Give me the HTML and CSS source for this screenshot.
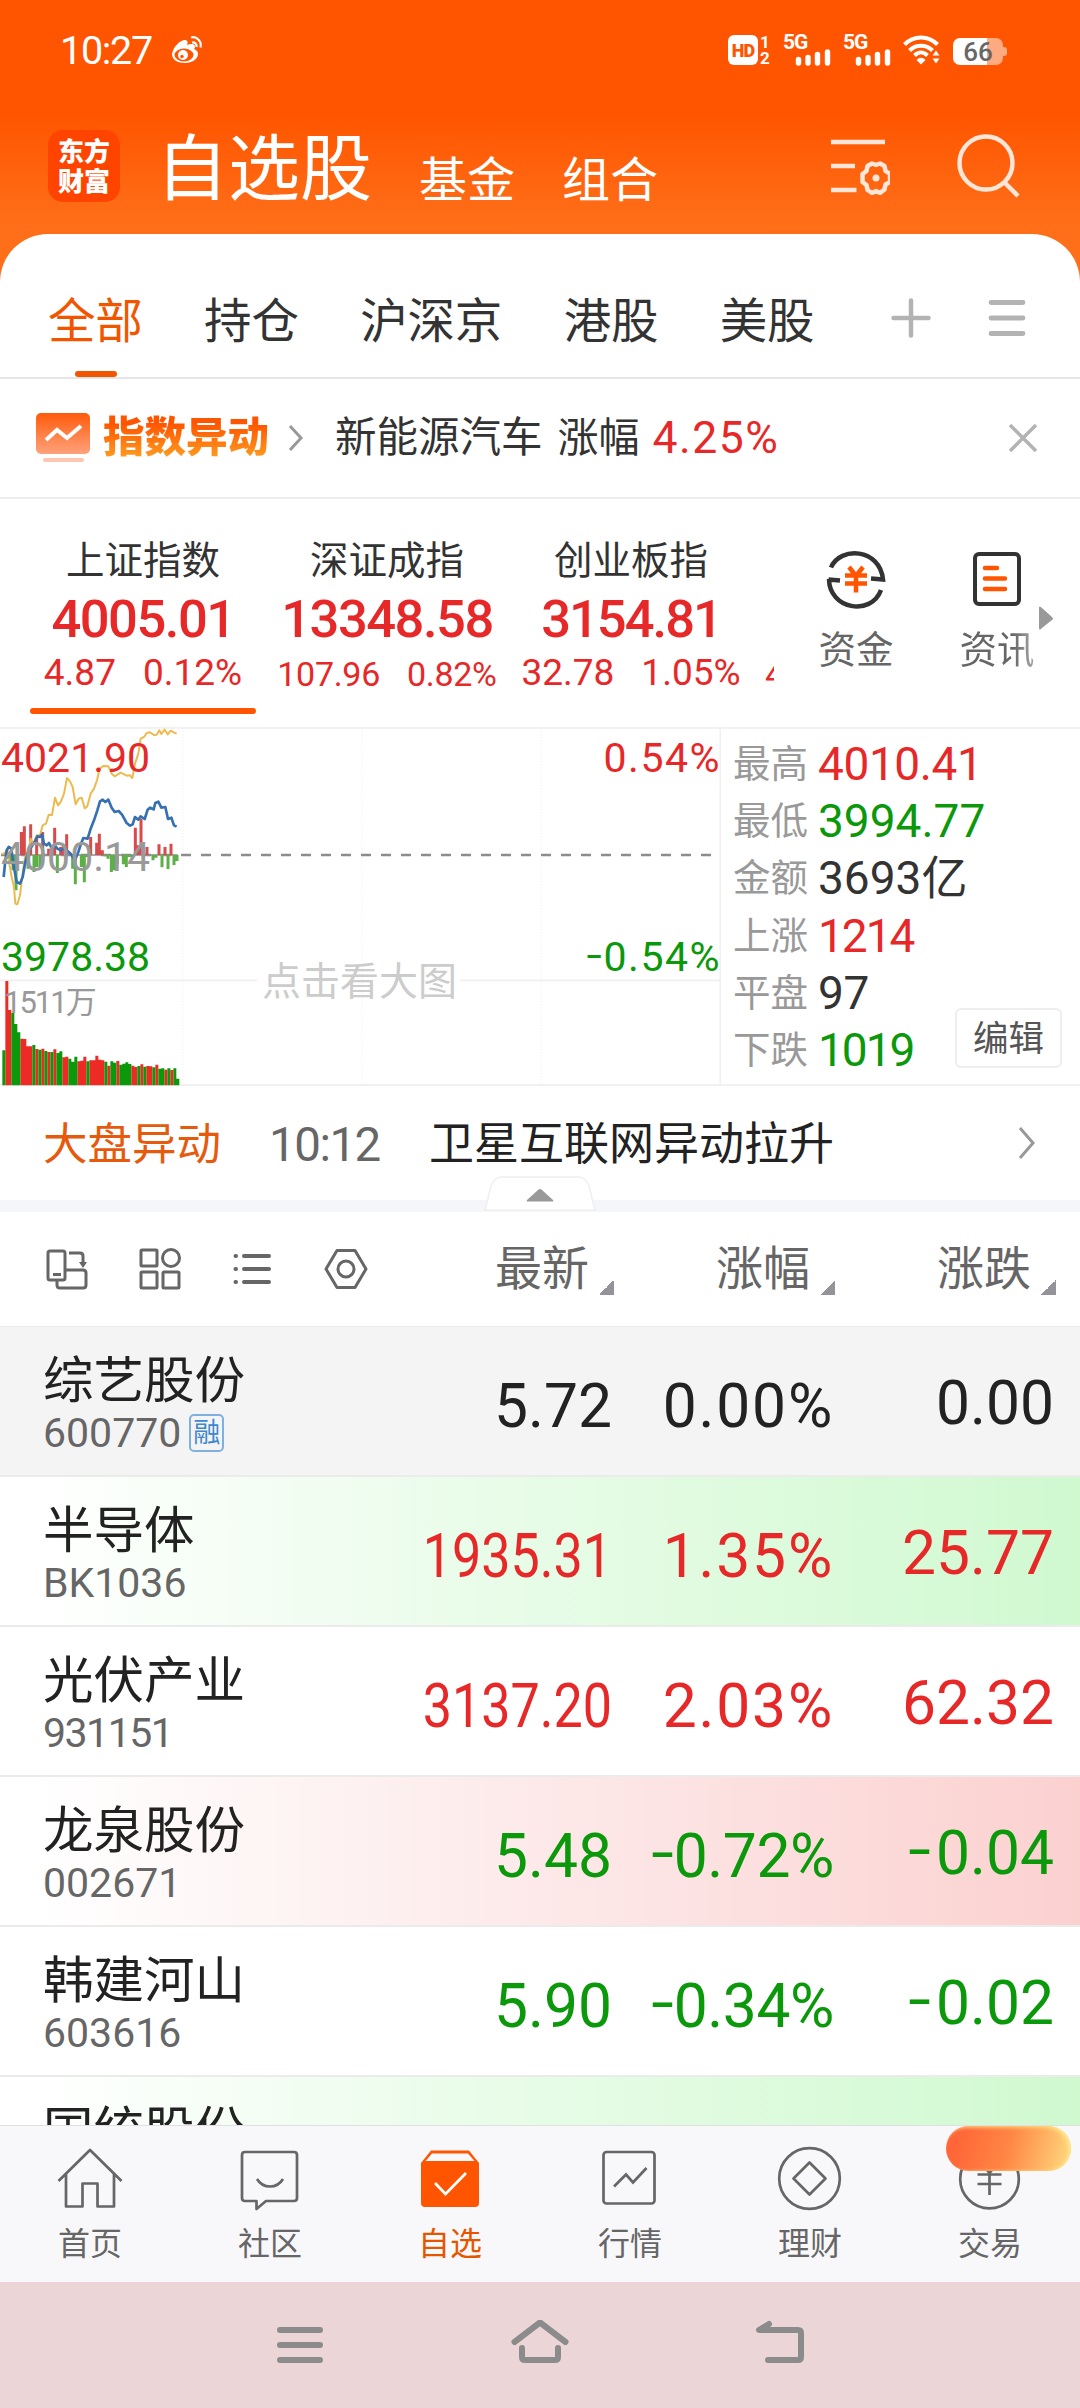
FILE: index.html
```html
<!DOCTYPE html>
<html lang="zh-CN">
<head>
    <meta charset="UTF-8">
    <meta name="viewport" content="width=device-width, initial-scale=1.0">
    <title>自选股</title>
    <link rel="stylesheet" href="styles.css">
</head>
<body>
<div class="app">
    <header class="header">
        <div class="status-bar">
            <span class="time">10:27</span>
            <svg class="weibo" width="32" height="30" viewBox="0 0 32 30" fill="none" stroke="#fff">
                <path fill="#fff" stroke="none" d="M1 19C2 12 9 5 14 5c3 0 3 3 2 5 3-1 7-2 8 1 0 1 0 2-1 3 3 1 4 3 4 5 0 5-6 9-13 9S1 25 1 19z"/>
                <ellipse cx="13" cy="20" rx="9.500" ry="6.500" fill="#ff5500" stroke="none"/>
                <circle cx="12" cy="20" r="5" fill="#fff" stroke="none"/>
                <circle cx="11" cy="21.500" r="1.700" fill="#ff5500" stroke="none"/>
                <path stroke-width="2.200" d="M20 2.500c6-1.500 11 4 9.500 10M21 7.500c3-.5 5 1.500 4.500 4.500"/>
            </svg>
            <div class="status-icons">
                <span class="hd">HD</span>
                <span class="sims"><i>1</i><i>2</i></span>
                <span class="signal">
                    <b>5G</b>
                    <svg width="36" height="17" viewBox="0 0 36 17" stroke="#fff" stroke-width="5.400" stroke-linecap="round"><path d="M3.500 14v-3.500M13 14V8.500M22.500 14V5.500M32.500 14V3"/></svg>
                </span>
                <span class="signal">
                    <b>5G</b>
                    <svg width="36" height="17" viewBox="0 0 36 17" stroke="#fff" stroke-width="5.400" stroke-linecap="round"><path d="M3.500 14v-3.500M13 14V8.500M22.500 14V5.500M32.500 14V3"/></svg>
                </span>
                <svg class="wifi" width="38" height="30" viewBox="0 0 38 30" fill="none" stroke="#fff" stroke-width="4">
                    <path d="M1.500 9.500c9-9.500 24-9.500 33 0M6.500 15.500c6.500-6.500 16.500-6.500 23 0M11.500 20.500c4-4 9-4 13 0"/>
                    <path fill="#fff" stroke="none" d="M13.500 25c3-3 6-3 9 0L18 29.500zM29.500 20.500l3.500-5 3.500 5zM29.500 23.500l3.500 5 3.500-5z"/>
                </svg>
                <span class="battery">66</span>
            </div>
        </div>
        <div class="title-bar">
            <div class="logo">东方<br>财富</div>
            <h1>自选股</h1>
            <a class="nav-link">基金</a>
            <a class="nav-link">组合</a>
            <svg class="manage" width="60" height="60" viewBox="0 0 60 60" fill="none" stroke="#ffe6d8" stroke-width="4.500">
                <path d="M1 7h54M1 31h24M1 55h25.500"/>
                <path stroke-linejoin="round" d="M42 28.500l4 1.500 4-1.500 4.500 2.500 1 5 4.500 3v8l-4.500 2.500-1 5L50 58l-4-2-4 2-4.500-3-1-5-4-3v-8l4-3 1-5z"/>
                <circle cx="46" cy="43" r="3.500" fill="#ffe6d8" stroke="none"/>
            </svg>
            <svg class="search" width="64" height="66" viewBox="0 0 64 66" fill="none" stroke="#ffe6d8" stroke-width="4.500">
                <circle cx="29" cy="30" r="26.500"/>
                <path d="M47 49l14 14"/>
            </svg>
        </div>
    </header>

    <main class="card">
        <nav class="tabs">
            <a class="active">全部</a>
            <a>持仓</a>
            <a>沪深京</a>
            <a>港股</a>
            <a>美股</a>
            <svg class="add" width="40" height="40" viewBox="0 0 40 40" stroke="#b3b3b3" stroke-width="4.500" stroke-linecap="round"><path d="M2.500 20h35M20 2.500v35"/></svg>
            <svg class="more" width="38" height="38" viewBox="0 0 38 38" stroke="#b3b3b3" stroke-width="4.800" stroke-linecap="round"><path d="M3 3.500h32M3 19h32M3 34.500h32"/></svg>
        </nav>

        <section class="notice">
            <svg width="54" height="50" viewBox="0 0 54 50">
                <defs>
                    <linearGradient id="ng" x1="0" y1="0" x2="0" y2="1"><stop offset="0" stop-color="#ff5a0a"/><stop offset="1" stop-color="#ffa27c"/></linearGradient>
                </defs>
                <rect width="54" height="41" rx="5" fill="url(#ng)"/>
                <path d="M10 27l11-10 10 8 14-12" fill="none" stroke="#fff" stroke-width="4"/>
                <rect x="7" y="45" width="41" height="4" rx="2" fill="#ffc7af"/>
            </svg>
            <strong>指数异动</strong>
            <svg class="arrow" width="16" height="28" viewBox="0 0 16 28" fill="none" stroke="#999" stroke-width="3"><path d="M2 2l11 12L2 26"/></svg>
            <span class="topic">新能源汽车</span>
            <span class="label">涨幅</span>
            <span class="value">4.25%</span>
            <svg class="close" width="30" height="30" viewBox="0 0 30 30" stroke="#b3b3b3" stroke-width="3.500"><path d="M2 2l26 26M28 2L2 28"/></svg>
        </section>

        <section class="indices">
            <div class="index-list">
                <div class="index active">
                    <h3>上证指数</h3>
                    <div class="point">4005.01</div>
                    <div class="change"><span>4.87</span><span>0.12%</span></div>
                </div>
                <div class="index">
                    <h3>深证成指</h3>
                    <div class="point">13348.58</div>
                    <div class="change small"><span>107.96</span><span>0.82%</span></div>
                </div>
                <div class="index">
                    <h3>创业板指</h3>
                    <div class="point narrow">3154.81</div>
                    <div class="change"><span>32.78</span><span>1.05%</span></div>
                </div>
                <div class="index next">
                    <h3></h3>
                    <div class="point"></div>
                    <div class="change small"><span>4</span></div>
                </div>
            </div>
            <a class="entry">
                <svg width="60" height="60" viewBox="0 0 60 60" fill="none" stroke="#333" stroke-width="4.500">
                    <path d="M5 18.500C14-3 54-1 57 30.500l-12-1M3 30C3 60 45 68 55 41M2.500 30.500l11.500 1"/>
                    <path stroke="#ff5500" stroke-width="4.500" d="M23 18l7 9 7-9M30 26v17.500M19 26.500h22M19 34.500h22"/>
                </svg>
                资金
            </a>
            <a class="entry last">
                <svg width="60" height="60" viewBox="0 0 60 60" fill="none" stroke="#333" stroke-width="4">
                    <rect x="8" y="5" width="44" height="50" rx="4"/>
                    <path stroke="#ff5500" stroke-width="4.500" stroke-linecap="round" d="M18 19h12M18 29.500h20M18 40h20"/>
                </svg>
                <span>资讯</span>
            </a>
            <svg class="next-arrow" width="16" height="26" viewBox="0 0 16 26"><path d="M1 3q0-3 3 0l10 9q2 2 0 3L4 23q-3 3-3 0z" fill="#999"/></svg>
        </section>

        <section class="market">
            <div class="chart">
                <!-- viewBox in thirds of a pixel -->
                <svg width="721" height="359" viewBox="0 20 2163 1077" fill="none">
                    <path stroke="#f0f0f0" stroke-width="5" d="M0 780h772M1380 780h783M0 1095h2163M2161 20v1077"/>
                    <path stroke="#ececec" stroke-width="3" stroke-dasharray="3 6" d="M549 24v1070M1086 24v1070M1623 24v1070"/>
                    <path stroke="#8c8c8c" stroke-width="7" stroke-dasharray="30 30" d="M3 404h2140"/>
                    <path stroke="#8c8c8c" stroke-width="4" d="M3 404h530"/>
                    <g id="flow" stroke-width="9"></g>
                    <path stroke="#edbb4d" stroke-width="6" stroke-linejoin="round" d="M5 402L15 398L22 385L28 430L35 470L42 500L46 550L52 552L60 525L68 460L75 410L85 395L92 355L100 370L110 345L120 345L128 315L138 310L146 283L156 284L165 232L174 255L183 243L192 220L201 173L210 183L218 200L227 252L236 235L245 232L254 264L262 258L272 220L282 205L291 180L299 145L310 137L325 138L335 160L344 168L362 157L380 166L390 165L397 173L405 130L415 100L422 55L432 50L440 38L450 36L462 44L470 43L478 30L484 41L494 28L503 42L512 31L521 36L530 40"/>
                    <path stroke="#3470b2" stroke-width="8" stroke-linejoin="round" d="M11 470L15 430L20 390L26 380L34 385L40 430L50 485L60 490L68 470L76 425L84 395L94 380L104 365L112 348L120 350L126 342L132 370L140 375L147 368L156 385L164 375L172 385L182 390L190 385L200 390L212 400L225 420L235 395L243 370L250 353L263 355L272 325L282 300L292 270L300 243L308 238L316 245L325 238L335 262L344 275L356 272L366 283L380 308L390 316L398 312L405 290L415 298L422 288L434 296L443 268L450 262L461 267L466 248L475 244L484 262L496 260L504 296L514 292L522 315L530 319"/>
                    <g id="volume" stroke-width="9"></g>
                </svg>
                <span class="axis high">4021.90</span>
                <span class="axis mid">4000.14</span>
                <span class="axis low">3978.38</span>
                <span class="axis high right">0.54%</span>
                <span class="axis low right"><u>-</u>0.54%</span>
                <span class="axis vol">1511万</span>
                <span class="hint">点击看大图</span>
            </div>
            <dl class="stats">
                <div><dt>最高</dt><dd class="up">4010.41</dd></div>
                <div><dt>最低</dt><dd class="down wide">3994.77</dd></div>
                <div><dt>金额</dt><dd class="wide">3693亿</dd></div>
                <div><dt>上涨</dt><dd class="up tight">1214</dd></div>
                <div><dt>平盘</dt><dd>97</dd></div>
                <div><dt>下跌</dt><dd class="down tight">1019</dd></div>
                <button class="edit">编辑</button>
            </dl>
        </section>

        <section class="news">
            <span class="tag">大盘异动</span>
            <span class="at">10:12</span>
            <span class="text">卫星互联网异动拉升</span>
            <svg width="20" height="34" viewBox="0 0 20 34" fill="none" stroke="#999" stroke-width="3"><path d="M3 2l13 15L3 32"/></svg>
        </section>
        <div class="divider">
            <svg class="handle" width="112" height="35" viewBox="0 0 112 35">
                <path d="M1 34C6 22 4 1 18 1h76c14 0 12 21 17 33z" fill="#fff" stroke="#efefef" stroke-width="1.500"/>
                <path d="M43 24l11-10q2-2 4 0l11 10q1 1.500-1 1.500H44q-2 0-1-1.500z" fill="#999"/>
            </svg>
        </div>

        <section class="list-head">
            <div class="tools">
                <svg width="44" height="44" viewBox="0 0 44 44" fill="none" stroke="#666" stroke-width="3">
                    <rect x="3" y="4" width="17" height="29" rx="2"/>
                    <path d="M24 6h11q3 0 3 3v8M12 33v5q0 3 3 3h23q3 0 3-3V26q0-3-3-3H20M8 27.500h8"/>
                    <path d="M34 15h8l-4 6z" fill="#666" stroke="none"/>
                </svg>
                <svg width="44" height="44" viewBox="0 0 44 44" fill="none" stroke="#666" stroke-width="3">
                    <rect x="3" y="3" width="16" height="16" rx="1"/><circle cx="33" cy="11" r="8.500"/>
                    <rect x="3" y="25" width="16" height="16" rx="1"/><rect x="25" y="25" width="16" height="16" rx="1"/>
                </svg>
                <svg width="44" height="44" viewBox="0 0 44 44" fill="none" stroke="#666" stroke-width="4" stroke-linecap="round">
                    <path d="M13 9h25M13 22h25M13 35h25M4.500 9h.5M4.500 22h.5M4.500 35h.5"/>
                </svg>
                <svg width="44" height="44" viewBox="0 0 44 44" fill="none" stroke="#666" stroke-width="3" stroke-linejoin="round">
                    <path d="M13 3.500h18L42 22 31 40.500H13L2 22z"/><circle cx="22" cy="22" r="8"/>
                </svg>
            </div>
            <div class="col price">最新<i></i></div>
            <div class="col rate">涨幅<i></i></div>
            <div class="col diff">涨跌<i></i></div>
        </section>

        <section class="stock-list">
            <div class="stock selected">
                <div class="name"><h2>综艺股份</h2><p>600770<em>融</em></p></div>
                <div class="price">5.72</div><div class="rate">0.00%</div><div class="diff">0.00</div>
            </div>
            <div class="stock flash-green up">
                <div class="name"><h2>半导体</h2><p>BK1036</p></div>
                <div class="price long">1935.31</div><div class="rate">1.35%</div><div class="diff">25.77</div>
            </div>
            <div class="stock up">
                <div class="name"><h2>光伏产业</h2><p class="tight">931151</p></div>
                <div class="price long">3137.20</div><div class="rate">2.03%</div><div class="diff">62.32</div>
            </div>
            <div class="stock flash-red down">
                <div class="name"><h2>龙泉股份</h2><p>002671</p></div>
                <div class="price">5.48</div><div class="rate"><u>-</u>0.72%</div><div class="diff"><u>-</u>0.04</div>
            </div>
            <div class="stock down">
                <div class="name"><h2>韩建河山</h2><p>603616</p></div>
                <div class="price">5.90</div><div class="rate"><u>-</u>0.34%</div><div class="diff"><u>-</u>0.02</div>
            </div>
            <div class="stock flash-green">
                <div class="name"><h2>国统股份</h2></div>
            </div>
        </section>
    </main>

    <nav class="tab-bar">
        <a>
            <svg width="66" height="66" viewBox="0 0 66 66" fill="none" stroke="#666" stroke-width="2.700" stroke-linejoin="round"><path d="M1.500 35L33 4l31.500 31M9 28v32.500h16.500v-23h15v23H57V28"/></svg>
            首页
        </a>
        <a>
            <svg width="66" height="66" viewBox="0 0 66 66" fill="none" stroke="#666" stroke-width="2.700" stroke-linejoin="round"><path d="M8 6h49q3 0 3 3v43q0 3-3 3H29l-9.500 8v-8H8q-3 0-3-3V9q0-3 3-3zM20 33c6 10 20 10 26 0"/></svg>
            社区
        </a>
        <a class="active">
            <svg width="66" height="66" viewBox="0 0 66 66" fill="none">
                <path fill="#ff5500" d="M4 17L14 4.500h38L62 17v40q0 4-4 4H8q-4 0-4-4z"/>
                <path fill="#f8f8fa" d="M8.500 15L15 7.500h36l6.500 7.500z"/>
                <path stroke="#fff" stroke-width="2.700" d="M18 37l10.500 11L49 27"/>
            </svg>
            自选
        </a>
        <a>
            <svg width="66" height="66" viewBox="0 0 66 66" fill="none" stroke="#666" stroke-width="2.700"><rect x="6.500" y="6" width="51" height="51.500" rx="3"/><path d="M17 40.500l12-12 7 8L49.500 22"/></svg>
            行情
        </a>
        <a>
            <svg width="66" height="66" viewBox="0 0 66 66" fill="none" stroke="#666" stroke-width="2.700" stroke-linejoin="round"><circle cx="32.500" cy="32.500" r="30.300"/><path d="M32.500 16.500L48.500 32.500l-16 16-16-16z"/></svg>
            理财
        </a>
        <a>
            <svg width="66" height="66" viewBox="0 0 66 66" fill="none" stroke="#666" stroke-width="2.700"><circle cx="32.500" cy="33" r="29.300"/><path d="M23 15l9.500 12L42 15M32.500 26v23M20.500 28.500h24M20.500 38h24"/></svg>
            交易
            <span class="bubble"></span>
        </a>
    </nav>

    <footer class="system-nav">
        <svg width="60" height="50" viewBox="0 0 60 50" fill="none" stroke="#8b8b8b" stroke-width="6" stroke-linecap="round"><path d="M10 10h40M10 25h40M10 40h40"/></svg>
        <svg width="60" height="50" viewBox="0 0 60 50" fill="none" stroke="#8b8b8b" stroke-width="6" stroke-linecap="round" stroke-linejoin="round"><path d="M4.500 22L30 2.500 55.500 22M12 28v9q0 3 3 3h30q3 0 3-3v-9"/></svg>
        <svg width="60" height="50" viewBox="0 0 60 50" fill="none" stroke="#8b8b8b" stroke-width="6" stroke-linecap="round" stroke-linejoin="round"><path d="M19 4L9 10h39q3 0 3 3v24q0 3-3 3H18"/></svg>
    </footer>
</div>

<script>
    // 红绿柱: [x, y]
    const up = [[64,335],[73,318],[92,312],[110,350],[128,335],[146,385],[164,322],[182,380],[190,375],[200,342],[272,350],[290,367],[298,340],[307,390],[406,322],[415,375],[423,296],[441,380],[477,372],[495,380],[513,370]];
    const down = [[30,430],[39,450],[48,510],[84,445],[102,455],[111,440],[121,445],[172,458],[218,445],[226,492],[244,440],[253,486],[262,410],[316,408],[324,415],[334,455],[343,450],[352,432],[370,432],[379,440],[388,410],[397,415],[459,420],[468,412],[486,441],[504,446],[522,434],[531,422]];

    // 成交量
    const volume = 'g990 r782 r869 g878 g911 g936 r955 r956 r978 r978 g974 r986 g988 r985 g992 r995 g995 r987 g998 g993 r1011 r1009 g1015 g1024 g1009 r1023 r1021 r1009 g1023 r1020 r1020 r1006 r1018 r1020 g1024 r1036 g1023 g1027 r1022 g1033 g1030 g1026 g1031 r1036 r1040 g1037 r1032 g1039 r1037 r1038 g1041 r1033 g1045 g1044 r1048 g1044 r1049 g1044 g1075'.split(' ');

    function bars(points, base, color) {
        const d = points.map(p => `M${p[0]} ${base}V${p[1]}`).join('');
        return `<path stroke="${color}" d="${d}"/>`;
    }

    const red = [], green = [];
    volume.forEach((v, i) => {
        (v[0] === 'r' ? red : green).push([11.5 + i * 9, v.slice(1)]);
    });

    document.getElementById('flow').innerHTML = bars(up, 404, '#d94b4b') + bars(down, 404, '#5cb046');
    document.getElementById('volume').innerHTML = bars(red, 1095, '#ee2a25') + bars(green, 1095, '#0b980b');
</script>
</body>
</html>
```
FILE: styles.css
```css
* {
    box-sizing: border-box;
}
body, h1, h2, h3, p, dl, dd {
    margin: 0;
    font-weight: 400;
}
body {
    width: 1080px;
    font-family: Roboto, "Noto Sans CJK SC", sans-serif;
    color: #333;
    background: #fff;
}
svg {
    display: block;
    flex: none;
}
i, em {
    font-style: normal;
}
/* 负号 */
u {
    display: inline-block;
    text-decoration: none;
    transform: translateY(-.06em) scaleX(1.35);
    transform-origin: right;
}
.app {
    display: flex;
    flex-direction: column;
    height: 2408px;
    overflow: hidden;
    background: linear-gradient(#ff5500 0, #ff5500 115px, #ff6d17 215px, #ff701a 300px);
}

/* 顶部 */
.header {
    flex: none;
    height: 234px;
    color: #fff;
}
.status-bar {
    display: flex;
    align-items: center;
    height: 100px;
    padding: 0 73px 0 60px;
}
.time {
    font-size: 39.500px;
    letter-spacing: -1.300px;
}
.weibo {
    margin-left: 19px;
}
.status-icons {
    display: flex;
    align-items: center;
    margin-left: auto;
    height: 30px;
}
.hd {
    width: 30px;
    height: 30px;
    border-radius: 6px;
    background: #fff;
    color: #ff5500;
    font-size: 18px;
    font-weight: 900;
    line-height: 31px;
    text-align: center;
    letter-spacing: -.8px;
}
.sims {
    display: flex;
    flex-direction: column;
    width: 13px;
    margin-left: 2px;
    font-size: 17px;
    font-weight: 700;
    line-height: 16px;
}
.signal {
    display: flex;
    flex-direction: column;
    width: 48px;
    height: 30px;
    margin-left: 10px;
}
.signal + .signal {
    margin-left: 12px;
}
.signal b {
    font-size: 21px;
    line-height: 14px;
    letter-spacing: -1px;
}
.signal svg {
    margin: 0 0 0 12px;
}
.wifi {
    margin-left: 12px;
}
.battery {
    position: relative;
    width: 50px;
    height: 27px;
    margin: 3px 4px 0 12px;
    border-radius: 7px;
    background: linear-gradient(90deg, #fff 34px, #ffaa80 34px);
    color: #666;
    font-size: 26px;
    font-weight: 500;
    line-height: 28px;
    text-align: center;
}
.battery::after {
    content: "";
    position: absolute;
    left: 50px;
    top: 9px;
    width: 4px;
    height: 9px;
    border-radius: 0 3px 3px 0;
    background: #ffaa80;
}
.title-bar {
    display: flex;
    padding: 30px 0 0 48px;
}
.logo {
    width: 72px;
    height: 72px;
    padding-top: 7px;
    border-radius: 15px;
    background: #ff4400;
    font-size: 26px;
    font-weight: 900;
    line-height: 30px;
    text-align: center;
}
h1 {
    width: 216px;
    margin: 4px 0 0 36px;
    font-size: 72px;
    line-height: 72px;
}
.nav-link {
    margin: 15px 0 0 47px;
    font-size: 48px;
    line-height: 72px;
}
.manage {
    margin: 5px 0 0 172px;
}
.search {
    margin: 3px 0 0 67px;
}

/* 内容 */
.card {
    display: flex;
    flex-direction: column;
    flex: none;
    height: 1891px;
    border-radius: 48px 48px 0 0;
    background: #fff;
    overflow: hidden;
}
.card > * {
    flex: none;
}
.tabs {
    display: flex;
    align-items: center;
    gap: 61.500px;
    height: 145px;
    padding: 0 53px 0 48px;
    border-bottom: 2px solid #e6e6e6;
}
.tabs a {
    position: relative;
    padding-top: 31px;
    font-size: 47.500px;
    line-height: 114px;
    height: 143px;
    letter-spacing: -.2px;
}
.tabs .active {
    color: #f25500;
}
.tabs .active::after {
    content: "";
    position: absolute;
    left: 27px;
    bottom: 0;
    width: 42px;
    height: 6px;
    border-radius: 3px;
    background: #f25500;
}
.add {
    margin: 25px 0 0 15px;
}
.more {
    margin: 25px 0 0 -4px;
}
.notice {
    display: flex;
    align-items: center;
    height: 120px;
    padding-left: 36px;
    border-bottom: 2px solid #ececec;
    font-size: 41.500px;
    line-height: 120px;
}
.notice strong {
    margin-left: 13px;
    font-weight: 900;
    background: linear-gradient(#ff5500 38%, #ff9a1f 66%);
    -webkit-background-clip: text;
    background-clip: text;
    color: transparent;
}
.arrow {
    margin-left: 19px;
}
.topic {
    margin-left: 31px;
}
.label {
    margin-left: 15px;
    font-size: 41px;
}
.value {
    margin-left: 13px;
    color: #e62828;
    font-size: 44.500px;
    letter-spacing: 1.500px;
}
.close {
    margin: 0 0 0 auto;
    transform: translateX(-42px);
}
.indices {
    display: flex;
    height: 228px;
}
.index-list {
    display: flex;
    width: 774px;
    padding-left: 21px;
    overflow: hidden;
}
.index {
    flex: none;
    width: 244px;
    padding-top: 35px;
    color: #e62828;
    text-align: center;
}
.index h3 {
    height: 54px;
    color: #333;
    font-size: 38.500px;
    line-height: 54px;
}
.point {
    height: 62px;
    font-size: 52.500px;
    font-weight: 500;
    line-height: 62px;
    letter-spacing: -1.500px;
}
.point.narrow {
    letter-spacing: -2px;
}
.change {
    display: flex;
    justify-content: center;
    gap: 27px;
    height: 46px;
    font-size: 37px;
    line-height: 46px;
}
.change.small {
    font-size: 34px;
    padding-top: 1px;
    letter-spacing: -.3px;
}
.index.active::after {
    content: "";
    display: block;
    width: 226px;
    height: 6px;
    margin: 12px 0 0 9px;
    border-radius: 3px;
    background: #ff5500;
}
.index.next .change {
    justify-content: flex-start;
    padding-left: 12px;
}
.entry {
    display: flex;
    flex-direction: column;
    align-items: center;
    width: 82px;
    margin: 50px 0 0 41px;
    color: #666;
    font-size: 37.500px;
    line-height: 83px;
}
.entry.last {
    margin-left: 59px;
}
.entry.last span {
    background: linear-gradient(90deg, #666 70%, #aaa);
    -webkit-background-clip: text;
    background-clip: text;
    color: transparent;
}
.next-arrow {
    margin-top: 106px;
}

/* 分时图 */
.market {
    display: flex;
    height: 359px;
    border-top: 2px solid #f2f2f2;
    border-bottom: 2px solid #f2f2f2;
}
.chart {
    position: relative;
    width: 721px;
}
.chart > svg {
    margin-top: -2px;
}
.axis {
    position: absolute;
    left: 1px;
    font-size: 41px;
    line-height: 50px;
    color: #e62828;
}
.axis.right {
    left: auto;
    right: 0;
    letter-spacing: 1.500px;
}
.axis.high {
    top: 4px;
}
.axis.mid {
    top: 103px;
    color: #999;
}
.axis.low {
    top: 203px;
    color: #0b980b;
}
.axis.vol {
    top: 249px;
    left: 4px;
    color: #999;
    font-size: 31px;
    letter-spacing: -2px;
}
.hint {
    position: absolute;
    left: 262px;
    top: 226px;
    color: #ccc;
    font-size: 39px;
    line-height: 54px;
}
.stats {
    position: relative;
    flex: 1;
    padding: 7px 0 0 12px;
}
.stats div {
    display: flex;
    height: 57.200px;
    line-height: 57px;
}
.stats dt {
    width: 85px;
    color: #999;
    font-size: 37.500px;
}
.stats dd {
    font-size: 46px;
    letter-spacing: -.4px;
}
.stats .wide {
    letter-spacing: 0;
}
.stats .tight {
    letter-spacing: -2px;
}
.up {
    color: #e62828;
}
.down {
    color: #0b980b;
}
.edit {
    position: absolute;
    right: 18px;
    bottom: 16px;
    width: 107px;
    height: 60px;
    padding: 0;
    border: 2px solid #eee;
    border-radius: 6px;
    background: #fff;
    color: #555;
    font: 35.500px/58px Roboto, "Noto Sans CJK SC", sans-serif;
}

/* 异动 */
.news {
    display: flex;
    align-items: center;
    height: 114px;
    padding: 4px 43px 0 43px;
    font-size: 44.500px;
    line-height: 60px;
}
.tag {
    color: #e65a0d;
}
.at {
    width: 110px;
    margin: 0 50px 0 48px;
    color: #666;
    font-size: 47.500px;
    letter-spacing: -1.500px;
}
.text {
    color: #222;
    font-size: 45px;
}
.news svg {
    margin: -4px 0 0 auto;
}
.divider {
    position: relative;
    height: 12px;
    background: #f5f6f9;
}
.handle {
    position: absolute;
    left: 484px;
    bottom: 1px;
}

/* 自选列表 */
.list-head {
    display: flex;
    align-items: center;
    height: 114px;
    color: #666;
    font-size: 47px;
}
.tools {
    display: flex;
    gap: 49px;
    width: 392px;
    padding-left: 45px;
}
.col {
    display: flex;
    justify-content: flex-end;
    align-items: flex-end;
    line-height: 54px;
}
.list-head .price {
    width: 222px;
}
.list-head .rate, .list-head .diff {
    width: 221px;
}
.col i {
    width: 15px;
    height: 15px;
    margin: 0 0 1px 10px;
    background: linear-gradient(135deg, transparent 50%, #939399 50%);
}
.stock-list {
    border-top: 1px solid #ebebeb;
}
.stock {
    display: flex;
    height: 150px;
    border-bottom: 2px solid #ebebeb;
    font-size: 60.500px;
    line-height: 160px;
    text-align: right;
}
.stock.selected {
    background: #f4f4f4;
    color: #222;
}
.flash-green {
    background: linear-gradient(90deg, #fff 3%, #e9fce9 45%, #d0f9d0);
}
.flash-red {
    background: linear-gradient(90deg, #fff 3%, #fde9e9 50%, #fbd1d0);
}
.name {
    width: 300px;
    padding: 24px 0 0 43px;
    text-align: left;
    line-height: 1;
}
h2 {
    color: #222;
    font-size: 50.500px;
    line-height: 60px;
}
.name p {
    display: flex;
    align-items: center;
    height: 44px;
    color: #666;
    font-size: 41px;
    line-height: 44px;
}
.name p.tight {
    letter-spacing: -1.500px;
}
.name em {
    width: 35px;
    height: 38px;
    margin-left: 8px;
    border: 2px solid #7fb0e0;
    border-radius: 5px;
    color: #3f87d0;
    font-size: 27px;
    line-height: 35px;
    text-align: center;
}
.stock .price {
    width: 312px;
}
.stock .rate {
    width: 222px;
    letter-spacing: 1.800px;
}
.stock.down .rate {
    letter-spacing: -.4px;
}
.stock .diff {
    width: 220px;
    line-height: 154px;
}
.diff u {
    margin-right: 5px;
}
.stock .long {
    transform: scaleX(.86);
    transform-origin: right;
}

/* 底部导航 */
.tab-bar {
    display: flex;
    flex: none;
    height: 157px;
    border-top: 1px solid #e0e0e2;
    background: #f8f8fa;
}
.tab-bar a {
    position: relative;
    display: flex;
    flex-direction: column;
    align-items: center;
    width: 180px;
    padding-top: 20px;
    color: #666;
    font-size: 32px;
    line-height: 64px;
}
.tab-bar .active {
    color: #e65500;
}
.bubble {
    position: absolute;
    left: 46px;
    top: 0;
    width: 125px;
    height: 45px;
    border-radius: 23px;
    background: linear-gradient(105deg, #ff6538 10%, #ff8744 50%, #ffcb74 90%);
    box-shadow: inset -3px 1px 4px #ffe98c;
}
.system-nav {
    display: flex;
    flex: none;
    justify-content: center;
    gap: 180px;
    height: 126px;
    padding-top: 38px;
    background: #ecd5d7;
}
```
